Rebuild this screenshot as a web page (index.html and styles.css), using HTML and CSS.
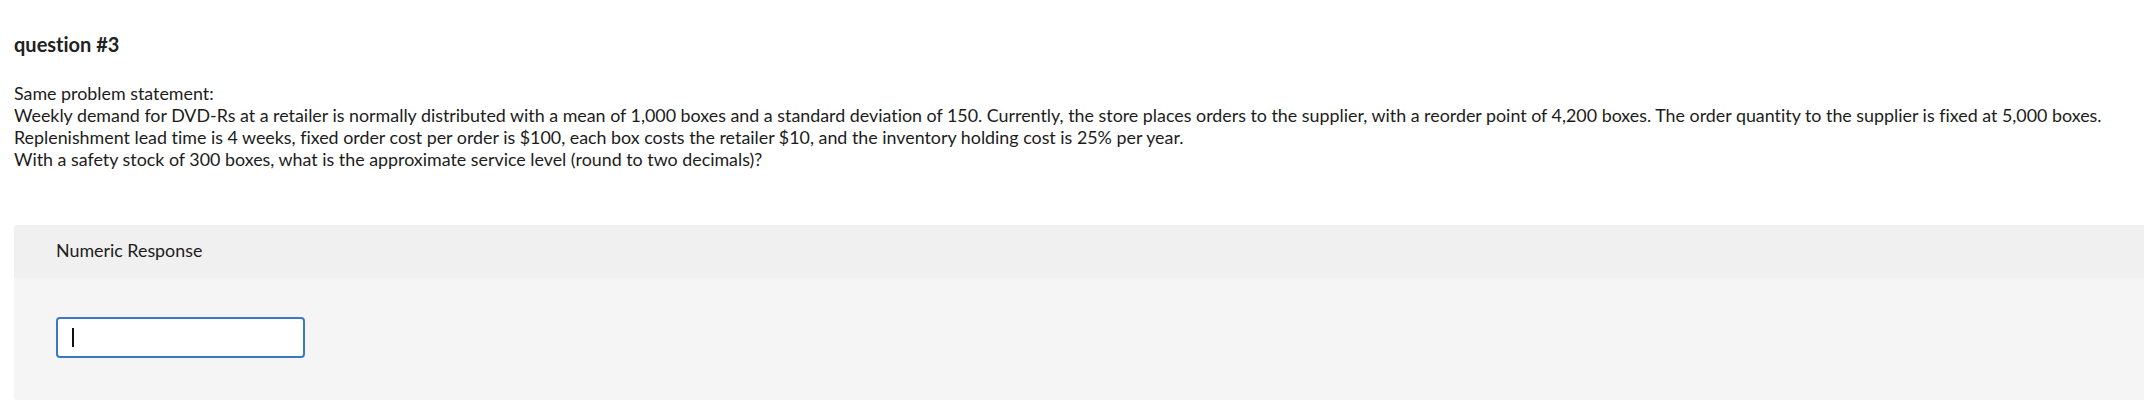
FILE: index.html
```html
<!DOCTYPE html>
<html>
<head>
<meta charset="utf-8">
<link rel="stylesheet" href="styles.css">
</head>
<body>
<div class="page">
  <h2 class="title">question #3</h2>
  <div class="prompt">
    <p>Same problem statement:<br>Weekly demand for DVD-Rs at a retailer is normally distributed with a mean of 1,000 boxes and a standard deviation of 150. Currently, the store places orders to the supplier, with a reorder point of 4,200 boxes. The order quantity to the supplier is fixed at 5,000 boxes.<br>Replenishment lead time is 4 weeks, fixed order cost per order is $100, each box costs the retailer $10, and the inventory holding cost is 25% per year.<br>With a safety stock of 300 boxes, what is the approximate service level (round to two decimals)?</p>
  </div>
  <div class="panel">
    <div class="panel-head">Numeric Response</div>
    <div class="panel-body">
      <div class="answer"><span class="caret"></span></div>
    </div>
  </div>
</div>
</body>
</html>
```

FILE: styles.css
```css
html, body {
  margin: 0;
  padding: 0;
  background: #ffffff;
}
body {
  font-family: "Lato", "Liberation Sans", sans-serif;
  color: #1c1c1c;
  font-size: 17.85px;
  font-variant-ligatures: none;
}
.page {
  padding: 0 0 0 14px;
  width: 2200px;
}
.title {
  margin: 0;
  padding-top: 32px;
  font-size: 20px;
  font-weight: 700;
  line-height: 24px;
  color: #222;
}
.prompt {
  margin-top: 26px;
}
.prompt p {
  margin: 0;
  line-height: 22px;
  white-space: nowrap;
}
.panel {
  margin-top: 55px;
  border-radius: 3px;
  overflow: hidden;
  height: 175px;
  display: flex;
  flex-direction: column;
}
.panel-head {
  background: #f0f0f0;
  height: 50px;
  padding-left: 42px;
  padding-bottom: 3px;
  display: flex;
  align-items: center;
}
.panel-body {
  flex: 1;
  background: #f5f5f5;
  padding: 39px 0 0 42px;
}
.answer {
  width: 231px;
  height: 37px;
  background: #fff;
  border: 2px solid #3b78c2;
  border-radius: 4px;
  display: flex;
  align-items: center;
  padding-left: 14px;
  box-sizing: content-box;
}
.caret {
  width: 2px;
  height: 19px;
  background: #111;
}
```
